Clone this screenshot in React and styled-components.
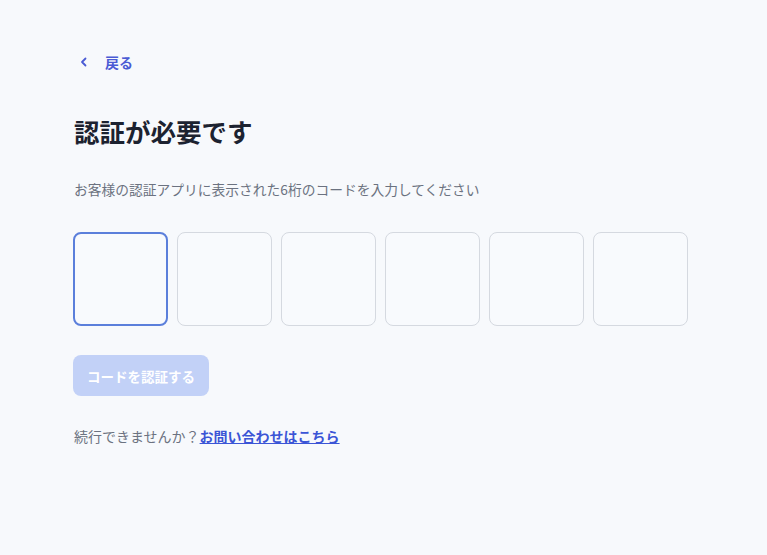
import React from 'react';
import styled, { createGlobalStyle } from 'styled-components';

const GlobalStyle = createGlobalStyle`
  html, body {
    margin: 0;
    background: #f7f9fc;
  }
  body {
    font-family: "Noto Sans CJK JP", "Noto Sans", sans-serif;
  }
`;

function App() {
  const digits = ['', '', '', '', '', ''];
  return (
    <>
      <GlobalStyle />
      <Page>
        <BackLink href="#">
          <svg width="10" height="10" viewBox="0 0 10 10" fill="none">
            <path d="M6.5 1.5 3 5l3.5 3.5" stroke="currentColor" strokeWidth="1.8" strokeLinecap="round" strokeLinejoin="round" />
          </svg>
          <span>戻る</span>
        </BackLink>
        <Title>認証が必要です</Title>
        <Subtitle>お客様の認証アプリに表示された6桁のコードを入力してください</Subtitle>
        <CodeRow>
          {digits.map((d, i) => (
            <CodeBox key={i} $active={i === 0} />
          ))}
        </CodeRow>
        <VerifyButton disabled>コードを認証する</VerifyButton>
        <Help>
          続行できませんか？<HelpLink href="#">お問い合わせはこちら</HelpLink>
        </Help>
      </Page>
    </>
  );
}

const Page = styled.main`
  display: flex;
  flex-direction: column;
  align-items: flex-start;
  padding: 52px 73px 0;
  min-height: 555px;
  box-sizing: border-box;
`;

const BackLink = styled.a`
  display: flex;
  align-items: center;
  gap: 16px;
  height: 20px;
  padding-left: 6px;
  color: #4a5bd4;
  font-size: 14px;
  font-weight: 700;
  text-decoration: none;
`;

const Title = styled.h1`
  margin: 43px 0 0 1px;
  font-size: 25.5px;
  line-height: 32px;
  font-weight: 700;
  color: #1c2230;
`;

const Subtitle = styled.p`
  margin: 32px 0 0 1px;
  font-size: 13.75px;
  line-height: 20px;
  color: #6b7280;
`;

const CodeRow = styled.div`
  display: flex;
  gap: 9px;
  margin-top: 33px;
`;

const CodeBox = styled.div`
  width: 95px;
  height: 94px;
  box-sizing: border-box;
  border-radius: 8px;
  background: #f8fafd;
  border: ${(p) => (p.$active ? '2px solid #5b7fdb' : '1px solid #d5d9e0')};
`;

const VerifyButton = styled.button`
  margin-top: 29px;
  height: 41px;
  padding: 0 14px;
  border: none;
  border-radius: 8px;
  background: #c2d1f7;
  color: #ffffff;
  font-family: inherit;
  font-size: 13.5px;
  font-weight: 700;
`;

const Help = styled.p`
  margin: 30px 0 0 1px;
  font-size: 14px;
  line-height: 20px;
  color: #6b7280;
`;

const HelpLink = styled.a`
  color: #3b55d6;
  font-weight: 700;
  text-decoration: underline;
`;

export default App;
